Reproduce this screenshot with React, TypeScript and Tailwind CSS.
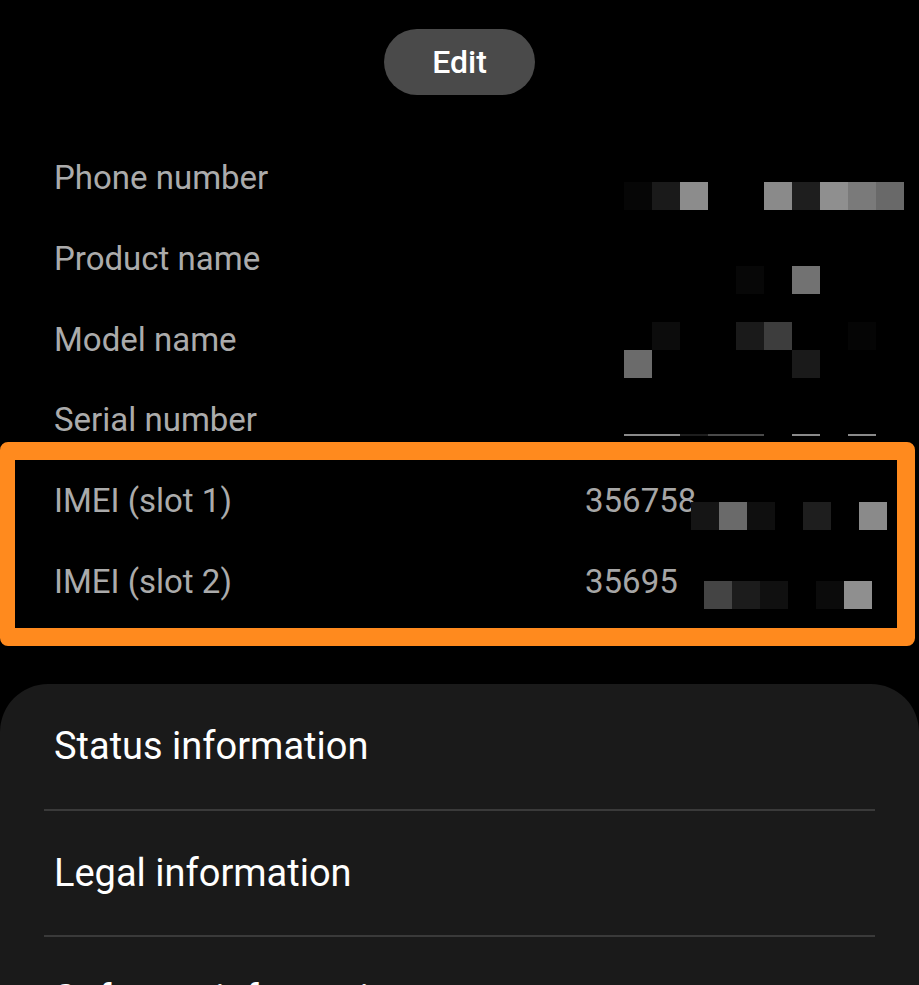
import React from "react";

type Block = { x: number; y: number; c: string; w?: number; h?: number };

const blocks: Block[] = [
  // Phone number
  { x: 624, y: 182, c: "#060606" },
  { x: 652, y: 182, c: "#1a1a1a" },
  { x: 680, y: 182, c: "#8c8c8c" },
  { x: 764, y: 182, c: "#8a8a8a" },
  { x: 792, y: 182, c: "#1e1e1e" },
  { x: 820, y: 182, c: "#8f8f8f" },
  { x: 848, y: 182, c: "#7a7a7a" },
  { x: 876, y: 182, c: "#696969" },
  // Product name
  { x: 736, y: 266, c: "#070707" },
  { x: 792, y: 266, c: "#727272" },
  // Model name
  { x: 652, y: 322, c: "#0c0c0c" },
  { x: 736, y: 322, c: "#1a1a1a" },
  { x: 764, y: 322, c: "#3d3d3d" },
  { x: 848, y: 322, c: "#050505" },
  { x: 624, y: 350, c: "#6b6b6b" },
  { x: 792, y: 350, c: "#1a1a1a" },
  // Serial number (thin strip)
  { x: 624, y: 434, w: 56, h: 2, c: "#8a8a8a" },
  { x: 680, y: 434, w: 28, h: 2, c: "#1e1e1e" },
  { x: 708, y: 434, w: 56, h: 2, c: "#4a4a4a" },
  { x: 792, y: 434, w: 28, h: 2, c: "#8a8a8a" },
  { x: 848, y: 434, w: 28, h: 2, c: "#8a8a8a" },
  // IMEI 1
  { x: 691, y: 502, c: "#151515" },
  { x: 719, y: 502, c: "#6a6a6a" },
  { x: 747, y: 502, c: "#0f0f0f" },
  { x: 803, y: 502, c: "#1e1e1e" },
  { x: 859, y: 502, c: "#8a8a8a" },
  // IMEI 2
  { x: 704, y: 581, c: "#444444" },
  { x: 732, y: 581, c: "#1c1c1c" },
  { x: 760, y: 581, c: "#101010" },
  { x: 816, y: 581, c: "#0b0b0b" },
  { x: 844, y: 581, c: "#8f8f8f" },
];

function InfoRow({ label, value, inBox }: { label: string; value?: string; inBox?: boolean }) {
  return (
    <div
      className={
        inBox
          ? "grid grid-cols-[531px_1fr] items-center h-[80.67px] pl-[39px] text-[33px] leading-none text-[#ababab]"
          : "grid grid-cols-[531px_1fr] items-center h-[80.67px] pl-[54px] text-[33px] leading-none text-[#ababab]"
      }
    >
      <span>{label}</span>
      <span className="text-[#a6a6a6]">{value ?? ""}</span>
    </div>
  );
}

function MenuItem({ label, h }: { label: string; h: string }) {
  return (
    <div className={`flex items-center pl-[54px] ${h} text-[38px] leading-none text-white`}>
      {label}
    </div>
  );
}

export default function App() {
  return (
    <div
      className="relative w-[919px] h-[985px] overflow-hidden bg-black"
      style={{ fontFamily: "Roboto, 'Noto Sans', sans-serif" }}
    >
      <div className="flex justify-center pt-[29px]">
        <button className="w-[151px] h-[66px] rounded-full bg-[#4a4a4a] text-white text-[32px] font-medium leading-none">
          Edit
        </button>
      </div>

      <div className="mt-[42.67px]">
        <InfoRow label="Phone number" />
        <InfoRow label="Product name" />
        <InfoRow label="Model name" />
        <InfoRow label="Serial number" />
      </div>

      <div className="mt-[-18px] mr-[4px] border-[18px] border-l-[15px] border-[#ff8a1e] rounded-[8px] pb-[6px]">
        <InfoRow label="IMEI (slot 1)" value="356758" inBox />
        <InfoRow label="IMEI (slot 2)" value="35695" inBox />
      </div>

      <div className="mt-[38px] bg-[#1a1a1a] rounded-t-[48px]">
        <MenuItem label="Status information" h="h-[125px]" />
        <div className="mx-[44px] h-[2px] bg-[#3a3a3a]" />
        <MenuItem label="Legal information" h="h-[124px]" />
        <div className="mx-[44px] h-[2px] bg-[#3a3a3a]" />
        <MenuItem label="Software information" h="h-[124px]" />
      </div>

      <svg
        className="absolute left-0 top-0 pointer-events-none"
        width={919}
        height={985}
        viewBox="0 0 919 985"
      >
        {blocks.map((b, i) => (
          <rect key={i} x={b.x} y={b.y} width={b.w ?? 28} height={b.h ?? 28} fill={b.c} />
        ))}
      </svg>
    </div>
  );
}
